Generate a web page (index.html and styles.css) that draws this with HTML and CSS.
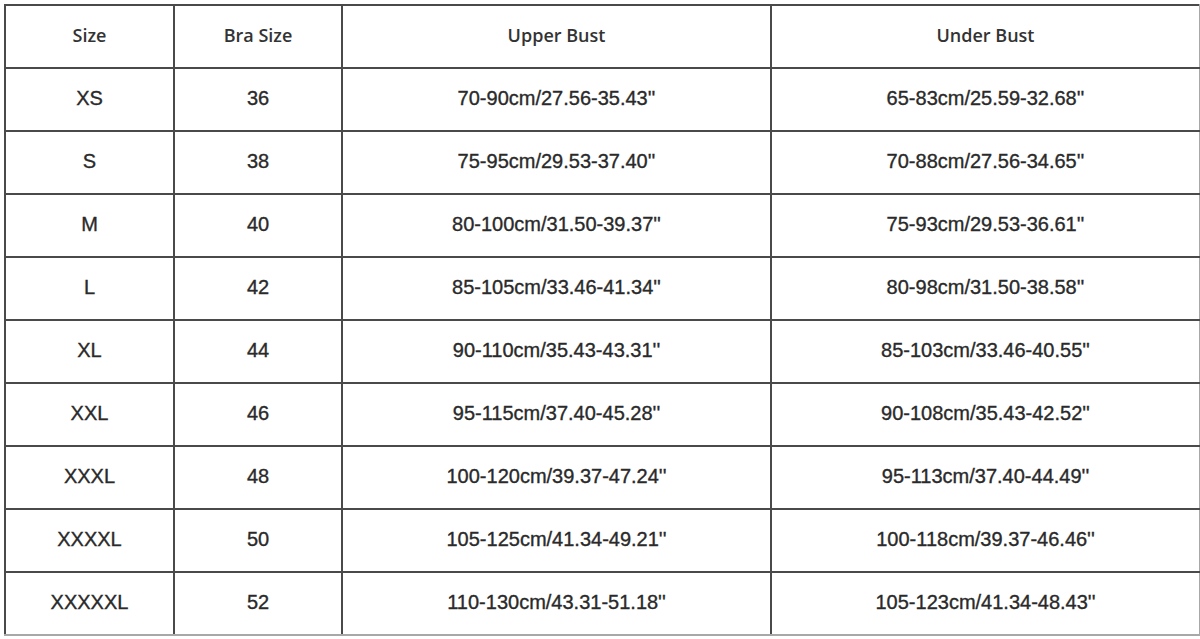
FILE: index.html
```html
<!DOCTYPE html>
<html lang="en">
<head>
<meta charset="utf-8">
<title>Size Chart</title>
<link rel="stylesheet" href="styles.css">
</head>
<body>
<div class="wrap">
<table class="chart">
<colgroup>
<col class="c1"><col class="c2"><col class="c3"><col class="c4">
</colgroup>
<thead>
<tr><th>Size</th><th>Bra Size</th><th>Upper Bust</th><th>Under Bust</th></tr>
</thead>
<tbody>
<tr><td>XS</td><td>36</td><td>70-90cm/27.56-35.43''</td><td>65-83cm/25.59-32.68''</td></tr>
<tr><td>S</td><td>38</td><td>75-95cm/29.53-37.40''</td><td>70-88cm/27.56-34.65''</td></tr>
<tr><td>M</td><td>40</td><td>80-100cm/31.50-39.37''</td><td>75-93cm/29.53-36.61''</td></tr>
<tr><td>L</td><td>42</td><td>85-105cm/33.46-41.34''</td><td>80-98cm/31.50-38.58''</td></tr>
<tr><td>XL</td><td>44</td><td>90-110cm/35.43-43.31''</td><td>85-103cm/33.46-40.55''</td></tr>
<tr><td>XXL</td><td>46</td><td>95-115cm/37.40-45.28''</td><td>90-108cm/35.43-42.52''</td></tr>
<tr><td>XXXL</td><td>48</td><td>100-120cm/39.37-47.24''</td><td>95-113cm/37.40-44.49''</td></tr>
<tr><td>XXXXL</td><td>50</td><td>105-125cm/41.34-49.21''</td><td>100-118cm/39.37-46.46''</td></tr>
<tr><td>XXXXXL</td><td>52</td><td>110-130cm/43.31-51.18''</td><td>105-123cm/41.34-48.43''</td></tr>
</tbody>
</table>
</div>
</body>
</html>
```
FILE: styles.css
```css
html, body {
  margin: 0;
  padding: 0;
  background: #ffffff;
}
.wrap {
  padding: 4px 0 0 4px;
}
.chart {
  border-collapse: collapse;
  table-layout: fixed;
  width: 1195px;
  font-family: "Liberation Sans", Arial, sans-serif;
  color: #2a2a2a;
}
.c1 { width: 169px; }
.c2 { width: 168px; }
.c3 { width: 429px; }
.c4 { width: 429px; }
.chart th,
.chart td {
  height: 58px;
  padding: 0 0 3px 0;
  border: 2px solid #4a4a4a;
  text-align: center;
  vertical-align: middle;
  font-size: 20px;
  line-height: 20px;
  -webkit-text-stroke: 0.35px #2a2a2a;
}
.chart th {
  font-family: "Open Sans", "Liberation Sans", sans-serif;
  font-weight: 600;
  font-size: 18px;
  color: #333333;
  -webkit-text-stroke: 0;
}
.chart tr > :last-child {
  border-right-color: #a8a8a8;
}
.chart tbody tr:last-child td {
  border-bottom-color: #a8a8a8;
}
```
